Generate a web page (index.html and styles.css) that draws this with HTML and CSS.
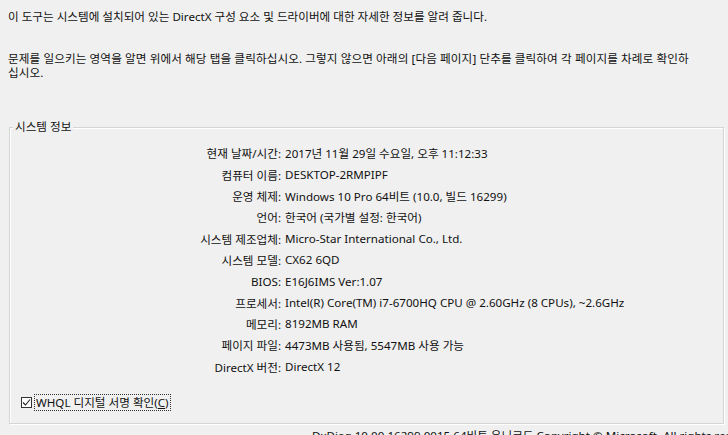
FILE: index.html
```html
<!DOCTYPE html>
<html lang="ko">
<head>
<meta charset="utf-8">
<link rel="stylesheet" href="styles.css">
</head>
<body>
<div class="page">
  <p class="intro">이 도구는 시스템에 설치되어 있는 DirectX 구성 요소 및 드라이버에 대한 자세한 정보를 알려 줍니다.</p>
  <p class="help">문제를 일으키는 영역을 알면 위에서 해당 탭을 클릭하십시오. 그렇지 않으면 아래의 [다음 페이지] 단추를 클릭하여 각 페이지를 차례로 확인하<br>십시오.</p>
  <div class="group">
    <div class="group-title">시스템 정보</div>
    <div class="info">
      <span class="k">현재 날짜/시간:</span><span class="v">2017년 11월 29일 수요일, 오후 11:12:33</span>
      <span class="k">컴퓨터 이름:</span><span class="v">DESKTOP-2RMPIPF</span>
      <span class="k">운영 체제:</span><span class="v">Windows 10 Pro 64비트 (10.0, 빌드 16299)</span>
      <span class="k">언어:</span><span class="v">한국어 (국가별 설정: 한국어)</span>
      <span class="k">시스템 제조업체:</span><span class="v">Micro-Star International Co., Ltd.</span>
      <span class="k">시스템 모델:</span><span class="v">CX62 6QD</span>
      <span class="k">BIOS:</span><span class="v">E16J6IMS Ver:1.07</span>
      <span class="k">프로세서:</span><span class="v">Intel(R) Core(TM) i7-6700HQ CPU @ 2.60GHz (8 CPUs), ~2.6GHz</span>
      <span class="k">메모리:</span><span class="v">8192MB RAM</span>
      <span class="k">페이지 파일:</span><span class="v">4473MB 사용됨, 5547MB 사용 가능</span>
      <span class="k">DirectX 버전:</span><span class="v">DirectX 12</span>
    </div>
    <div class="check-row">
      <span class="checkbox"><svg width="9" height="9" viewBox="0 0 9 9"><path d="M1 4.5 L3.5 7 L8 1.5" fill="none" stroke="#222" stroke-width="1.1"/></svg></span>
      <span class="check-label">WHQL 디지털 서명 확인(<u>C</u>)</span>
    </div>
  </div>
  <div class="footer">DxDiag 10.00.16299.0015 64비트 유니코드 Copyright © Microsoft. All rights reserved.</div>
</div>
</body>
</html>
```
FILE: styles.css
```css
html, body {
  margin: 0;
  padding: 0;
  background: #f0f0f0;
}
body {
  width: 728px;
  height: 435px;
  overflow: hidden;
  font-family: "Noto Sans", "Noto Sans CJK KR", sans-serif;
  font-size: 11.6px;
  color: #111;
}
.page {
  width: 720px;
  height: 425px;
  overflow: hidden;
  padding: 10px 0 0 8px;
}
.intro {
  margin: 0;
  line-height: 14px;
  white-space: nowrap;
}
.help {
  margin: 28px 0 0 0;
  line-height: 14px;
  white-space: nowrap;
  letter-spacing: 0.1px;
}
.group {
  margin: 47px 0 0 1px;
  width: 713px;
  height: 295px;
  border: 1px solid #d5d5d5;
  box-shadow: inset 1px 1px 0 #fff, 1px 1px 0 #fff;
  box-sizing: content-box;
}
.group-title {
  display: block;
  width: fit-content;
  margin: -8px 0 0 3px;
  padding: 0 2px;
  line-height: 14px;
  background: #f0f0f0;
}
.info {
  display: grid;
  grid-template-columns: 271px auto;
  column-gap: 4px;
  grid-auto-rows: 21.33px;
  align-items: center;
  margin-top: 8.7px;
}
.k {
  text-align: right;
  white-space: nowrap;
}
.v {
  white-space: nowrap;
}
.check-row {
  display: flex;
  align-items: center;
  margin: 16px 0 0 11px;
  height: 18px;
}
.checkbox {
  width: 9px;
  height: 9px;
  border: 1px solid #333;
  background: #fff;
  display: flex;
  align-items: center;
  justify-content: center;
}
.check-label {
  margin-left: 2px;
  border: 1px dotted #333;
  padding: 0 1px;
  line-height: 15px;
}
.check-label u {
  text-decoration: underline;
}
.footer {
  margin: 5px 0 0 304px;
  white-space: nowrap;
  line-height: 14px;
}
```
